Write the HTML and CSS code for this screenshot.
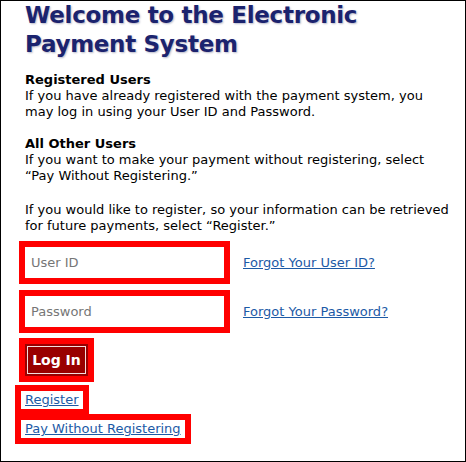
FILE: index.html
```html
<!DOCTYPE html>
<html lang="en">
<head>
    <meta charset="UTF-8">
    <meta name="viewport" content="width=device-width, initial-scale=1.0">
    <title>Electronic Payment System</title>
    <link rel="stylesheet" href="styles.css">
</head>
<body>
    <div class="page">
        <h1>Welcome to the Electronic Payment System</h1>

        <p class="intro">
            <strong>Registered Users</strong><br>
            If you have already registered with the payment system, you may log in using your User ID and Password.
        </p>

        <p class="intro">
            <strong>All Other Users</strong><br>
            If you want to make your payment without registering, select &ldquo;Pay Without Registering.&rdquo;
        </p>

        <p class="intro last">
            If you would like to register, so your information can be retrieved for future payments, select &ldquo;Register.&rdquo;
        </p>

        <form class="login" onsubmit="return false;">
            <div class="row">
                <input type="text" class="field" placeholder="User ID">
                <a href="#" class="side-link">Forgot Your User ID?</a>
            </div>
            <div class="row">
                <input type="password" class="field" placeholder="Password">
                <a href="#" class="side-link">Forgot Your Password?</a>
            </div>
            <button type="submit" class="btn-login">Log In</button>
        </form>

        <div class="links">
            <a href="#" class="box-link">Register</a>
            <a href="#" class="box-link">Pay Without Registering</a>
        </div>
    </div>
</body>
</html>
```

FILE: styles.css
```css
/* Page */
body {
    margin: 0;
    padding: 0;
    background: #fff;
    color: #000;
    font-family: Verdana, "DejaVu Sans", sans-serif;
    font-size: 13px;
    line-height: 16px;
}

.page {
    box-sizing: border-box;
    height: 462px;
    border: 1px solid #000;
    padding: 0 13px 0 24px;
}

h1 {
    margin: 0;
    font-size: 23px;
    line-height: 29px;
    letter-spacing: -0.3px;
    font-weight: bold;
    color: #1b236e;
    text-shadow: 1px 1px 2px #b8b8c8;
}

.intro {
    margin: 13px 0 0;
}

.intro + .intro {
    margin-top: 16px;
}

.intro.last {
    margin-top: 18px;
}

/* Login form */
.login {
    margin-top: 13px;
}

.row {
    display: flex;
    align-items: center;
    margin-bottom: 18px;
}

.field {
    box-sizing: border-box;
    width: 199px;
    height: 31px;
    margin: 0;
    padding: 0 6px;
    border: none;
    outline: 6px solid #f00;
    font-family: inherit;
    font-size: 13px;
    color: #000;
}

.field::placeholder {
    color: #767676;
}

.side-link {
    margin-left: 19px;
    color: #1c5aa6;
}

.btn-login {
    display: block;
    box-sizing: border-box;
    width: 63px;
    height: 32px;
    margin: -1px 0 0;
    padding: 0;
    background: #990000;
    border: 2px solid #990000;
    box-shadow: inset 0 0 0 1px #f2dede;
    outline: 6px solid #f00;
    color: #fff;
    font-family: inherit;
    font-size: 14px;
    font-weight: bold;
}

/* Bottom links */
.links {
    margin: 15px 0 0 -4px;
}

.box-link {
    display: table;
    padding: 0 4px;
    line-height: 18px;
    outline: 6px solid #f00;
    color: #1c5aa6;
    background: #fff;
    margin-bottom: 11px;
}
```
